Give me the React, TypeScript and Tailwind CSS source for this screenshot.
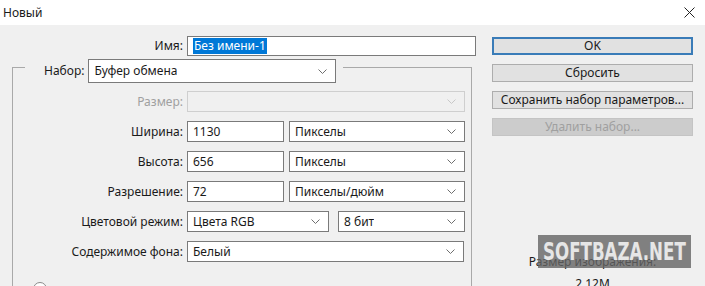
import React from 'react';

const font = "font-['Noto_Sans',_'Open_Sans',_sans-serif]";

const Chevron = ({ disabled }: { disabled?: boolean }) => (
  <svg width="9" height="5" viewBox="0 0 9 5" className="shrink-0">
    <path d="M0.5 0.5 L4.5 4.5 L8.5 0.5" fill="none" stroke={disabled ? '#c8c8c8' : '#6e6e6e'} strokeWidth="1" />
  </svg>
);

const Select = ({ value, className = '', disabled }: { value?: string; className?: string; disabled?: boolean }) => (
  <div
    className={`flex items-center justify-between border pl-[5px] pr-[8px] ${
      disabled ? 'border-[#cfcfcf] bg-[#f0f0f0]' : 'border-[#7a7a7a] bg-white'
    } ${className}`}
  >
    <span className="truncate">{value}</span>
    <Chevron disabled={disabled} />
  </div>
);

const Input = ({ value, className = '' }: { value: string; className?: string }) => (
  <div className={`flex items-center border border-[#7a7a7a] bg-white pl-[5px] ${className}`}>{value}</div>
);

const Row = ({ label, disabled, children }: { label: string; disabled?: boolean; children: React.ReactNode }) => (
  <div className="flex h-[21px] items-center">
    <span className={`w-[174px] shrink-0 pr-[4px] text-right ${disabled ? 'text-[#a0a0a0]' : ''}`}>{label}</span>
    {children}
  </div>
);

const Button = ({ label, primary, disabled }: { label: string; primary?: boolean; disabled?: boolean }) => (
  <div
    className={`flex h-[18px] items-center justify-center ${
      primary
        ? 'border-2 border-[#3a7cb8] bg-[#e1e1e1]'
        : disabled
          ? 'border border-[#c4c4c4] bg-[#cccccc] text-[#a0a0a0]'
          : 'border border-[#adadad] bg-[#e1e1e1]'
    }`}
  >
    {label}
  </div>
);

export default function App() {
  return (
    <div className={`${font} relative h-[286px] w-[705px] overflow-hidden bg-[#f0f0f0] text-[12px] leading-[16px] text-[#1a1a1a]`}>
      {/* title bar */}
      <div className="flex h-[25px] items-center justify-between bg-white pl-[3px] pr-[10px]">
        <span>Новый</span>
        <svg width="11" height="11" viewBox="0 0 11 11">
          <path d="M0.5 0.5 L10.5 10.5 M10.5 0.5 L0.5 10.5" stroke="#222" strokeWidth="1" />
        </svg>
      </div>

      <div className="flex">
        {/* left column */}
        <div className="w-[476px] shrink-0 pt-[11px]">
          <div className="flex h-[20px] items-center">
            <span className="w-[187px] shrink-0 pr-[4px] text-right">Имя:</span>
            <div className="flex h-[20px] flex-1 items-center border border-[#7a7a7a] bg-white pl-[5px]">
              <span className="bg-[#0078d7] px-[1px] text-white">Без имени-1</span>
            </div>
          </div>

          {/* group box */}
          <div className="ml-[12px] mt-[11px] h-[230px] w-[460px] border-l border-r border-t border-[#a9a9a9]">
            <div className="-mt-[9px] ml-[12px] flex w-[318px] items-center gap-[4px] bg-[#f0f0f0] pl-[19px] pr-[7px]">
              <span>Набор:</span>
              <Select value="Буфер обмена" className="h-[24px] flex-1" />
            </div>

            <div className="mt-[8px] flex flex-col gap-[9px]">
              <Row label="Размер:" disabled>
                <Select disabled className="h-[21px] w-[278px]" />
              </Row>
              <Row label="Ширина:">
                <Input value="1130" className="h-[21px] w-[97px]" />
                <Select value="Пикселы" className="ml-[5px] h-[21px] w-[176px]" />
              </Row>
              <Row label="Высота:">
                <Input value="656" className="h-[21px] w-[97px]" />
                <Select value="Пикселы" className="ml-[5px] h-[21px] w-[176px]" />
              </Row>
              <Row label="Разрешение:">
                <Input value="72" className="h-[21px] w-[97px]" />
                <Select value="Пикселы/дюйм" className="ml-[5px] h-[21px] w-[176px]" />
              </Row>
              <Row label="Цветовой режим:">
                <Select value="Цвета RGB" className="h-[21px] w-[142px]" />
                <Select value="8 бит" className="ml-[9px] h-[21px] w-[127px]" />
              </Row>
              <Row label="Содержимое фона:">
                <Select value="Белый" className="h-[21px] w-[277px]" />
              </Row>
            </div>

            <div className="ml-[20px] mt-[20px] h-[14px] w-[14px] rounded-full border border-[#8a8a8a] bg-white" />
          </div>
        </div>

        {/* right column */}
        <div className="ml-[16px] w-[201px] shrink-0 pt-[12px]">
          <div className="flex flex-col gap-[9px]">
            <Button label="OK" primary />
            <Button label="Сбросить" />
            <Button label="Сохранить набор параметров..." />
            <Button label="Удалить набор..." disabled />
          </div>
          <div className="mt-[118px] text-center">Размер изображения:</div>
          <div className="mt-[6px] text-center">2,12M</div>
        </div>
      </div>

      {/* watermark */}
      <div className="absolute left-[538px] top-[235px] flex h-[33px] w-[153px] items-center justify-center overflow-hidden bg-[#646464]/80">
        <span className="inline-block scale-x-[0.74] whitespace-nowrap font-['DejaVu_Sans_Condensed',_sans-serif] text-[25px] font-bold leading-[33px] text-[#e6e6e6]">
          SOFTBAZA.NET
        </span>
      </div>
    </div>
  );
}
